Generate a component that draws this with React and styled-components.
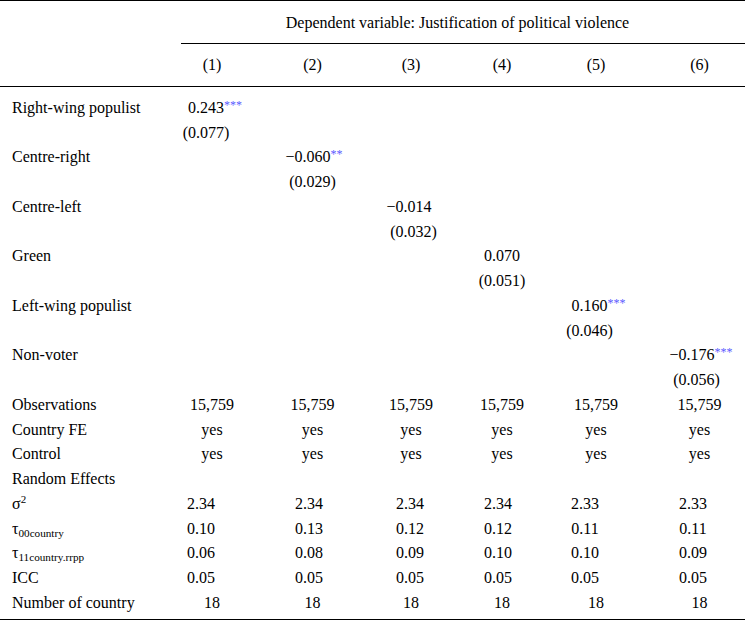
import React from 'react'
import styled, { createGlobalStyle } from 'styled-components'

const GlobalStyle = createGlobalStyle`
  body {
    margin: 0;
    background: #fff;
  }
`

// column widths chosen so every column centre sits where the reference has it
const template = '155px 114px 87px 110px 72px 116px 91px'

// per-column nudges (px) of the centre for coefficient rows and random-effect rows
const cols = [
  { coef: -6, re: -11 },
  { coef: 0, re: -3.5 },
  { coef: 2.5, re: -1 },
  { coef: 0, re: -4 },
  { coef: -6.5, re: -11 },
  { coef: -3, re: -6.5 },
]

const predictors = [
  { label: 'Right-wing populist', est: '0.243', neg: false, stars: '***', se: '(0.077)' },
  { label: 'Centre-right', est: '0.060', neg: true, stars: '**', se: '(0.029)' },
  { label: 'Centre-left', est: '0.014', neg: true, stars: '', se: '(0.032)' },
  { label: 'Green', est: '0.070', neg: false, stars: '', se: '(0.051)' },
  { label: 'Left-wing populist', est: '0.160', neg: false, stars: '***', se: '(0.046)' },
  { label: 'Non-voter', est: '0.176', neg: true, stars: '***', se: '(0.056)' },
]

const footer = [
  { label: 'Observations', values: Array(6).fill('15,759') },
  { label: 'Country FE', values: Array(6).fill('yes') },
  { label: 'Control', values: Array(6).fill('yes') },
]

const randomRows = [
  { label: <>σ<Sup>2</Sup></>, values: ['2.34', '2.34', '2.34', '2.34', '2.33', '2.33'] },
  { label: <>τ<Sub>00country</Sub></>, values: ['0.10', '0.13', '0.12', '0.12', '0.11', '0.11'] },
  { label: <>τ<Sub>11country.rrpp</Sub></>, values: ['0.06', '0.08', '0.09', '0.10', '0.10', '0.09'] },
  { label: 'ICC', values: Array(6).fill('0.05') },
]

function Sup({ children }) {
  return <SupText>{children}</SupText>
}

function Sub({ children }) {
  return <SubText>{children}</SubText>
}

function Coef({ est, neg, stars }) {
  return (
    <Number>
      {neg && <Minus>−</Minus>}
      {est}
      {stars && <Stars>{stars}</Stars>}
    </Number>
  )
}

const App = () => {
  return (
    <>
      <GlobalStyle />
      <Table>
        <TopRow>
          <div />
          <Spanner>Dependent variable: Justification of political violence</Spanner>
        </TopRow>
        <NumRow>
          <div />
          {cols.map((c, i) => (
            <Val key={i}>({i + 1})</Val>
          ))}
        </NumRow>
        <Body>
          {predictors.map((p, r) => (
            <React.Fragment key={p.label}>
              <Label>{p.label}</Label>
              {cols.map((c, i) => (
                <Val key={i} $shift={c.coef}>
                  {i === r && <Coef est={p.est} neg={p.neg} stars={p.stars} />}
                </Val>
              ))}
              <Label />
              {cols.map((c, i) => (
                <Val key={i} $shift={c.coef}>
                  {i === r && p.se}
                </Val>
              ))}
            </React.Fragment>
          ))}
          {footer.map(f => (
            <React.Fragment key={f.label}>
              <Label>{f.label}</Label>
              {f.values.map((v, i) => (
                <Val key={i}>{v}</Val>
              ))}
            </React.Fragment>
          ))}
          <Label>Random Effects</Label>
          {cols.map((c, i) => (
            <Val key={i} />
          ))}
          {randomRows.map((f, r) => (
            <React.Fragment key={r}>
              <Label>{f.label}</Label>
              {f.values.map((v, i) => (
                <Val key={i} $shift={cols[i].re}>{v}</Val>
              ))}
            </React.Fragment>
          ))}
          <Label>Number of country</Label>
          {cols.map((c, i) => (
            <Val key={i}>18</Val>
          ))}
        </Body>
      </Table>
    </>
  )
}

export default App

const Table = styled.div`
  width: 745px;
  border-top: 1px solid #000;
  border-bottom: 1px solid #000;
  font-family: "Liberation Serif", "Times New Roman", serif;
  font-size: 16px;
  line-height: 18px;
  color: #000;
`
const TopRow = styled.div`
  display: grid;
  grid-template-columns: 155px 1fr;
`
const Spanner = styled.div`
  margin-left: 26px;
  padding: 12.6px 11px 11.4px 0;
  border-bottom: 1px solid #000;
  text-align: center;
`
const NumRow = styled.div`
  display: grid;
  grid-template-columns: ${template};
  padding: 12.5px 0 11.5px;
  border-bottom: 1px solid #000;
`
const Body = styled.div`
  display: grid;
  grid-template-columns: ${template};
  grid-auto-rows: 24.75px;
  align-items: center;
  padding: 8.6px 0 4.15px;
`
const Label = styled.div`
  padding-left: 12px;
  white-space: nowrap;
`
const Val = styled.div`
  text-align: center;
  white-space: nowrap;
  padding-left: ${p => (p.$shift > 0 ? p.$shift * 2 : 0)}px;
  padding-right: ${p => (p.$shift < 0 ? -p.$shift * 2 : 0)}px;
`
const Number = styled.span`
  position: relative;
  display: inline-block;
`
const Minus = styled.span`
  position: absolute;
  right: 100%;
  top: 0;
`
const Stars = styled.span`
  position: absolute;
  left: 100%;
  top: 0;
  font-size: 12px;
  line-height: 12px;
  color: #5a5aff;
`
const SupText = styled.sup`
  font-size: 11px;
  vertical-align: 6px;
  line-height: 0;
`
const SubText = styled.sub`
  font-size: 11.2px;
  vertical-align: -3px;
  line-height: 0;
`
